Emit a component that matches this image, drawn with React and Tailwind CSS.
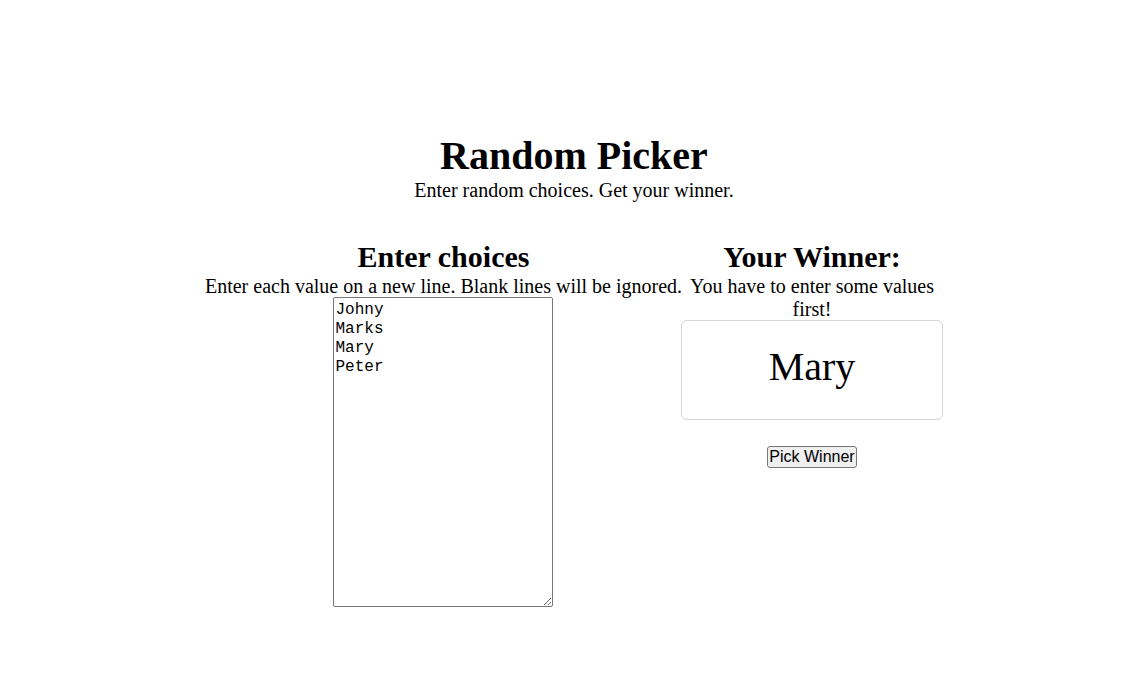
import React, { useState } from 'react';

const serif = { fontFamily: '"Liberation Serif", "Times New Roman", serif' };

const App = () => {
    const [choices, setChoices] = useState('Johny\nMarks\nMary\nPeter');
    const [winner, setWinner] = useState('Mary');

    const pickWinner = () => {
        const list = choices.split('\n').map((s) => s.trim()).filter(Boolean);
        if (list.length) setWinner(list[Math.floor(Math.random() * list.length)]);
    };

    return (
        <div className="min-h-[687px] bg-white text-black pt-[133px] pl-[14px] font-['Liberation_Serif',serif]">
            <div className="flex flex-col items-center">
                <h1 className="text-[40px] font-bold leading-[46px]">Random Picker</h1>
                <p className="text-[20px] leading-[23px]">Enter random choices. Get your winner.</p>
            </div>

            <div className="flex justify-center items-start mt-[38px]">
                <div className="flex flex-col items-center">
                    <h2 className="text-[30px] font-bold leading-[34px]">Enter choices</h2>
                    <p className="text-[20px] leading-[23px] whitespace-nowrap pt-[1px] -mb-[1px]">
                        Enter each value on a new line. Blank lines will be ignored.
                    </p>
                    <textarea
                        value={choices}
                        onChange={(e) => setChoices(e.target.value)}
                        className="w-[220px] h-[310px] border border-[#767676] rounded-[2px] px-[1px] pt-[3px] pb-[1px] text-[16px] leading-[19px] font-['Liberation_Mono',monospace] resize outline-none"
                    />
                </div>

                <div className="flex flex-col items-center w-[262px] -ml-[1px]">
                    <h2 className="text-[30px] font-bold leading-[34px]">Your Winner:</h2>
                    <p className="text-[20px] leading-[23px] text-center px-[8px] pt-[1px] -mb-[1px]">
                        You have to enter some values first!
                    </p>
                    <div className="w-[262px] h-[100px] border border-[#d4d4d4] rounded-[6px] flex items-center justify-center">
                        <span className="text-[40px] leading-[46px] pb-[6px]" style={serif}>{winner}</span>
                    </div>
                    <button
                        onClick={pickWinner}
                        className="mt-[26px] w-[90px] h-[22px] border border-[#767676] bg-[#efefef] rounded-[3px] text-[16px] leading-[18px] font-['Liberation_Sans',Arial,sans-serif] flex items-center justify-center"
                    >
                        Pick Winner
                    </button>
                </div>
            </div>
        </div>
    );
};

export default App;
